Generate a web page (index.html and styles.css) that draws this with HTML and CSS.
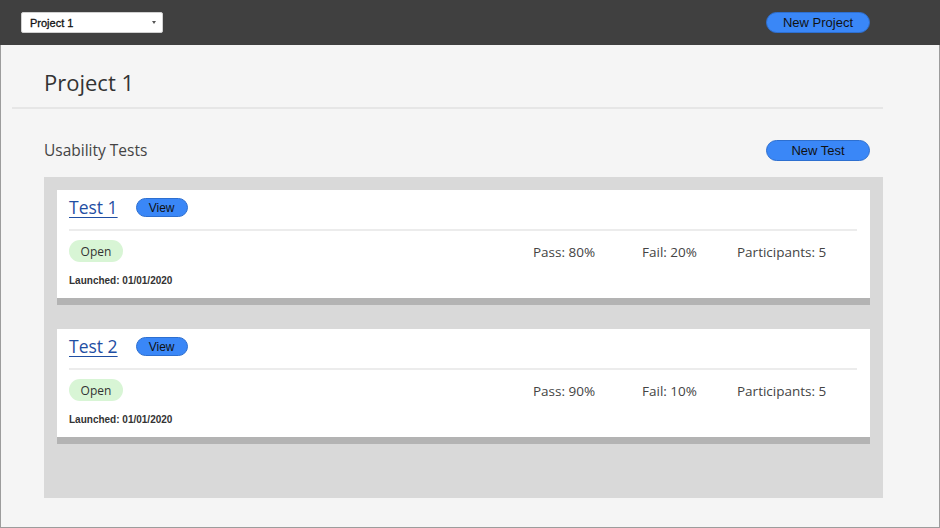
FILE: index.html
```html
<!DOCTYPE html>
<html>
<head>
<meta charset="utf-8">
<link rel="stylesheet" href="styles.css">
</head>
<body>
<div class="app">
  <header class="topbar">
    <div class="select"><span>Project 1</span><span class="caret"></span></div>
    <button class="btn">New Project</button>
  </header>
  <main class="main">
    <h1 class="title">Project 1</h1>
    <div class="section-head">
      <h2 class="subtitle">Usability Tests</h2>
      <button class="btn">New Test</button>
    </div>
    <div class="tests">
      <div class="card">
        <div class="card-top">
          <a class="test-link" href="#">Test 1</a>
          <button class="btn btn-small">View</button>
        </div>
        <div class="card-body">
          <div class="left">
            <span class="badge">Open</span>
            <span class="launched">Launched: 01/01/2020</span>
          </div>
          <div class="stats">
            <span class="stat pass">Pass: 80%</span>
            <span class="stat fail">Fail: 20%</span>
            <span class="stat parts">Participants: 5</span>
          </div>
        </div>
      </div>
      <div class="card">
        <div class="card-top">
          <a class="test-link" href="#">Test 2</a>
          <button class="btn btn-small">View</button>
        </div>
        <div class="card-body">
          <div class="left">
            <span class="badge">Open</span>
            <span class="launched">Launched: 01/01/2020</span>
          </div>
          <div class="stats">
            <span class="stat pass">Pass: 90%</span>
            <span class="stat fail">Fail: 10%</span>
            <span class="stat parts">Participants: 5</span>
          </div>
        </div>
      </div>
    </div>
  </main>
</div>
</body>
</html>
```
FILE: styles.css
```css
* { box-sizing: border-box; }
html, body { margin: 0; padding: 0; }
body { font-family: "Open Sans", "Noto Sans", sans-serif; color: #333; }

.app {
  width: 940px;
  height: 528px;
  border: 1px solid #9c9c9c;
  border-top: none;
  background: #f5f5f5;
  display: flex;
  flex-direction: column;
}

.topbar {
  height: 45px;
  background: #404040;
  margin: 0 -1px;
  display: flex;
  align-items: center;
  justify-content: space-between;
  padding: 0 70px 0 21px;
  flex-shrink: 0;
}

.select {
  width: 142px;
  height: 21px;
  background: #fff;
  border: 1px solid #d0d0d0;
  border-radius: 2px;
  display: flex;
  align-items: center;
  justify-content: space-between;
  padding: 0 6px 0 8px;
  font-family: "Liberation Sans", Arial, sans-serif;
  font-size: 11px;
  color: #111;
  -webkit-text-stroke: 0.3px #111;
}
.caret {
  width: 0; height: 0;
  border-left: 2px solid transparent;
  border-right: 2px solid transparent;
  border-top: 3px solid #555;
}

.btn {
  width: 104px;
  height: 21px;
  border: 1px solid #2d6fd0;
  background: #3a87f7;
  border-radius: 11px;
  font-family: "Liberation Sans", Arial, sans-serif;
  font-size: 13px;
  color: #111;
  padding: 0;
  cursor: pointer;
}
.btn-small {
  width: 52px;
  height: 19px;
  font-size: 12px;
  border-radius: 10px;
}

.main {
  flex: 1;
  padding: 0 56px 0 11px;
  display: flex;
  flex-direction: column;
}

.title {
  margin: 0;
  height: 64px;
  padding: 22px 0 0 32px;
  font-size: 22px;
  font-weight: 400;
  color: #333;
  line-height: 30px;
  border-bottom: 2px solid #e6e6e6;
}

.section-head {
  display: flex;
  justify-content: space-between;
  align-items: center;
  padding: 30px 13px 0 32px;
  height: 68px;
}
.section-head .btn { margin-top: -16px; }
.subtitle {
  margin: 0;
  margin-top: -16px;
  font-size: 15.5px;
  font-weight: 400;
  color: #444;
}

.tests {
  margin-left: 32px;
  height: 321px;
  background: #d9d9d9;
  padding: 13px 13px;
  display: flex;
  flex-direction: column;
  gap: 24px;
}

.card {
  background: #fff;
  height: 115px;
  border-bottom: 7px solid #b3b3b3;
  padding: 0 13px 0 12px;
}

.card-top {
  height: 41px;
  border-bottom: 2px solid #ececec;
  display: flex;
  align-items: center;
  gap: 18px;
  padding-bottom: 5px;
}
.card-top .btn-small { margin-top: 1px; }

.test-link {
  font-size: 17.5px;
  color: #1f4ea3;
  text-decoration: underline;
  text-decoration-thickness: 1px;
  text-underline-offset: 3px;
}

.card-body {
  display: flex;
  justify-content: space-between;
  padding-top: 9px;
}
.left {
  display: flex;
  flex-direction: column;
  align-items: flex-start;
  gap: 13px;
}
.badge {
  width: 54px;
  height: 22px;
  border-radius: 11px;
  background: #d8f5d5;
  font-size: 12px;
  color: #333;
  display: flex;
  align-items: center;
  justify-content: center;
}
.launched {
  font-family: "Liberation Sans", Arial, sans-serif;
  font-size: 10px;
  font-weight: 700;
  color: #333;
}

.stats {
  display: flex;
  padding-top: 3px;
  font-size: 13.5px;
  color: #444;
}
.stat { display: block; }
.pass { width: 109px; }
.fail { width: 95px; }
.parts { width: 120px; }
```
